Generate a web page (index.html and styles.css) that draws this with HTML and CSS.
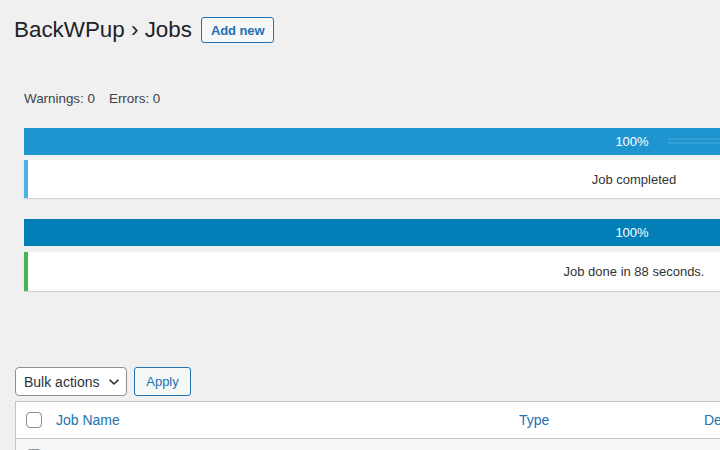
FILE: index.html
```html
<!DOCTYPE html>
<html>
<head>
<meta charset="utf-8">
<link rel="stylesheet" href="styles.css">
</head>
<body>
<div class="wrap">
  <div class="heading">
    <h1 class="title">BackWPup › Jobs</h1>
    <a class="btn-add">Add new</a>
  </div>

  <div class="summary">
    <span>Warnings: 0</span>
    <span>Errors: 0</span>
  </div>

  <div class="progress">
    <div class="bar bar-step"><span class="pct">100%</span><span class="stripes"></span></div>
    <div class="msg msg-info">Job completed</div>
  </div>

  <div class="progress">
    <div class="bar bar-total"><span class="pct">100%</span></div>
    <div class="msg msg-done">Job done in 88 seconds.</div>
  </div>

  <div class="tablenav">
    <div class="select">Bulk actions
      <svg class="chev" width="14" height="14" viewBox="0 0 14 14"><path d="M3 5.2 L7 9 L11 5.2" fill="none" stroke="#2c3338" stroke-width="1.6" stroke-linecap="round" stroke-linejoin="round"/></svg>
    </div>
    <a class="btn-apply">Apply</a>
  </div>

  <div class="table">
    <div class="row head">
      <div class="cell cb"><span class="checkbox"></span></div>
      <div class="cell name"><a>Job Name</a></div>
      <div class="cell type"><a>Type</a></div>
      <div class="cell dest"><a>Destinations</a></div>
    </div>
    <div class="row alt">
      <div class="cell cb"><span class="checkbox"></span></div>
      <div class="cell name"></div>
      <div class="cell type"></div>
      <div class="cell dest"></div>
    </div>
  </div>
</div>
</body>
</html>
```

FILE: styles.css
```css
html, body {
  margin: 0;
  padding: 0;
  background: #f0f0f1;
  overflow: hidden;
  width: 720px;
  height: 450px;
}

.wrap {
  width: 1240px;
  padding-left: 14px;
  font-family: "Liberation Sans", Arial, sans-serif;
  color: #3c434a;
}

.heading {
  display: flex;
  align-items: center;
  gap: 9px;
  padding-top: 15px;
  height: 30px;
}

.title {
  margin: 0;
  font-size: 22.4px;
  font-weight: 400;
  line-height: 30px;
  color: #1d2327;
}

.btn-add {
  display: inline-flex;
  align-items: center;
  height: 24px;
  padding: 0 9px 0 9px;
  border: 1px solid #2271b1;
  border-radius: 3px;
  background: #f6f7f7;
  color: #2271b1;
  font-size: 13px;
  font-weight: 700;
  letter-spacing: -0.1px;
}

.summary {
  margin: 46px 0 0 10px;
  font-size: 13.4px;
  line-height: 16px;
  color: #3c434a;
  display: flex;
  gap: 14px;
}

.progress {
  margin-left: 10px;
  width: 1216px;
}

.summary + .progress {
  margin-top: 21px;
}

.progress + .progress {
  margin-top: 21px;
}

.bar {
  position: relative;
  height: 27px;
  display: flex;
  align-items: center;
  justify-content: center;
  color: #fff;
  font-size: 13px;
}

.bar-step {
  background: #1e95cf;
}

.bar-total {
  background: #0180b8;
}

.pct {
  position: relative;
  z-index: 1;
}

.stripes {
  position: absolute;
  left: 644px;
  right: 0;
  top: 10px;
  height: 8px;
  background: repeating-linear-gradient(180deg, rgba(255,255,255,0.10) 0 2px, rgba(255,255,255,0) 2px 4px);
}

.msg {
  margin-top: 5px;
  background: #fff;
  height: 38px;
  display: flex;
  align-items: center;
  justify-content: center;
  font-size: 13px;
  color: #333;
  box-shadow: 0 1px 1px rgba(0,0,0,0.12);
  border-left: 4px solid #4ab3e6;
}

.msg-done {
  border-left-color: #46b450;
  height: 39px;
  margin-top: 6px;
}

.tablenav {
  margin: 76px 0 0 1px;
  display: flex;
  gap: 7px;
  height: 29px;
}

.select {
  width: 112px;
  box-sizing: border-box;
  height: 29px;
  border: 1px solid #8c8f94;
  border-radius: 4px;
  background: #fff;
  color: #2c3338;
  font-size: 14px;
  display: flex;
  align-items: center;
  padding-left: 8px;
  gap: 6px;
}

.chev {
  margin-left: 2px;
}

.btn-apply {
  box-sizing: border-box;
  width: 57px;
  height: 29px;
  border: 1px solid #2271b1;
  border-radius: 3px;
  background: #f6f7f7;
  color: #2271b1;
  font-size: 13px;
  display: flex;
  align-items: center;
  justify-content: center;
}

.table {
  margin: 5px 0 0 1px;
  border: 1px solid #c3c4c7;
  border-right: 0;
  background: #fff;
}

.row {
  display: grid;
  grid-template-columns: 40px 463px 185px 300px;
  height: 36px;
  align-items: center;
}

.row.alt {
  background: #f6f7f7;
  border-top: 1px solid #c3c4c7;
}

.cell {
  font-size: 14px;
  color: #2271b1;
}

.cell.cb {
  padding-left: 10px;
  display: flex;
  align-items: center;
}

.checkbox {
  display: block;
  box-sizing: border-box;
  width: 16px;
  height: 16px;
  border: 1px solid #8c8f94;
  border-radius: 4px;
  background: #fff;
}
```
